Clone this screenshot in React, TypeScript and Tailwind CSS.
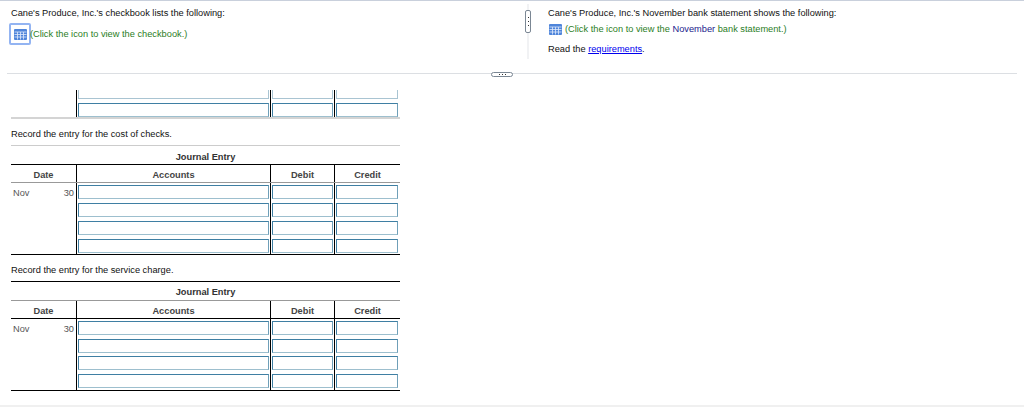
function TableIcon() {
  return (
    <svg width="13" height="11" viewBox="0 0 13 11" className="block shrink-0">
      <rect width="13" height="11" rx="1" fill="#4f85da" />
      <path
        d="M0.5 3h12M0.5 5.5h12M0.5 8h12M3.5 3v7.5M6.5 3v7.5M9.5 3v7.5"
        stroke="#dfeafb"
        strokeWidth="0.8"
        fill="none"
      />
    </svg>
  );
}

function Field() {
  return (
    <div className="h-[14px] border border-[#3f7fa3] border-b-[#9dbfce] border-r-[#6f9fb8] bg-white" />
  );
}

const cols = "grid grid-cols-[65px_194px_64px_66px]";

function EntryRow({ date, day, tall }: { date?: string; day?: string; tall: boolean }) {
  return (
    <div className={`${cols} ${tall ? "h-[18px]" : "h-[17.67px]"}`}>
      <div className="flex justify-between pt-[4.5px] pl-[2px] pr-[2px] text-[#555]">
        <span>{date}</span>
        <span>{day}</span>
      </div>
      <div className="border-l border-black pt-[2px] pl-px pr-px">
        <Field />
      </div>
      <div className="border-l border-black pt-[2px] pl-px pr-px">
        <Field />
      </div>
      <div className="border-l border-black pt-[2px] pl-px pr-[2px]">
        <Field />
      </div>
    </div>
  );
}

function Journal({ second = false }: { second?: boolean }) {
  return (
    <div className="w-[389px]">
      <div
        className={`flex h-[19px] items-center justify-center font-bold text-[#333] border-t ${
          second ? "border-black pt-[3px]" : "border-[#ccc] pt-[4px]"
        }`}
      >
        Journal Entry
      </div>
      <div
        className={`${cols} h-[19px] border-t border-b font-bold text-[#444] ${
          second ? "border-t-[#999] border-b-black" : "border-t-black border-b-[#999]"
        }`}
      >
        <div className="flex items-center justify-center pt-[3px]">Date</div>
        <div className="flex items-center justify-center border-l border-black pt-[3px]">Accounts</div>
        <div className="flex items-center justify-center border-l border-black pt-[3px]">Debit</div>
        <div className="flex items-center justify-center border-l border-black pt-[3px]">Credit</div>
      </div>
      <EntryRow date="Nov" day="30" tall={!second} />
      <EntryRow tall={!second} />
      <EntryRow tall={!second} />
      <EntryRow tall={!second} />
      <div className={`h-px bg-black ${second ? "" : "-mt-px"}`} />
    </div>
  );
}

export default function App() {
  return (
    <main
      className="relative h-[407px] w-[1024px] overflow-hidden bg-white text-[9.25px] leading-[11px] text-[#111]"
      style={{ fontFamily: '"Liberation Sans", Arial, sans-serif' }}
    >
      <div className="h-px bg-[#c9d0dc]" />

      <div className="mx-[7px] flex h-[73px] border-b border-[#dcdfe3]">
        <div className="w-[520px] pl-1 pt-[7px]">
          <p>Cane's Produce, Inc.'s checkbook lists the following:</p>
          <div className="mt-[4px] flex items-center">
            <div className="-ml-[2px] -mr-px flex h-[22px] w-[22px] items-center justify-center rounded-[2px] border-2 border-[#93b4f2]">
              <TableIcon />
            </div>
            <span className="text-[#2a7d1e]">(Click the icon to view the checkbook.)</span>
          </div>
        </div>

        <div className="relative mb-[14px] mt-[3px] w-[2px] bg-[#f1f2f4]">
          <div className="absolute -left-[2px] top-[6px] flex h-[23px] w-[6px] flex-col items-center justify-center gap-[3px] rounded-[2px] border border-[#7b8794] bg-white">
            <span className="h-px w-px bg-[#333]" />
            <span className="h-px w-px bg-[#333]" />
            <span className="h-px w-px bg-[#333]" />
          </div>
        </div>

        <div className="pl-[19px] pt-[7px]">
          <p>Cane's Produce, Inc.'s November bank statement shows the following:</p>
          <div className="mt-[5px] flex items-center gap-[3px] pl-px">
            <TableIcon />
            <span className="text-[#2a7d1e]">
              (Click the icon to view the <span className="text-[#1a1a8c]">November</span> bank statement.)
            </span>
          </div>
          <p className="mt-[9px]">
            Read the <a className="text-[#0000ee] underline">requirements</a>.
          </p>
        </div>
      </div>

      <div className="absolute left-[491px] top-[72px] flex h-[5px] w-[22px] items-center justify-center gap-[2px] rounded-[3px] border border-[#7b8794] bg-white">
        <span className="h-px w-px bg-[#333]" />
        <span className="h-px w-px bg-[#333]" />
        <span className="h-px w-px bg-[#333]" />
      </div>

      <div className="pl-[11px] pt-[16px]">
        <div className={`${cols} h-[29px] w-[389px] border-b-2 border-[#d4d4d4]`}>
          <div />
          <div className="border-l border-black px-px">
            <div className="h-[9px] border-x border-b border-[#a9c4d2]" />
            <div className="mt-[4px]">
              <Field />
            </div>
          </div>
          <div className="border-l border-black px-px">
            <div className="h-[9px] border-x border-b border-[#a9c4d2]" />
            <div className="mt-[4px]">
              <Field />
            </div>
          </div>
          <div className="border-l border-black pl-px pr-[2px]">
            <div className="h-[9px] border-x border-b border-[#a9c4d2]" />
            <div className="mt-[4px]">
              <Field />
            </div>
          </div>
        </div>

        <p className="mt-[10px] mb-[5px]">Record the entry for the cost of checks.</p>
        <Journal />

        <p className="mt-[10px] mb-[5px]">Record the entry for the service charge.</p>
        <Journal second />
      </div>

      <div className="absolute bottom-0 left-0 h-[2px] w-full bg-[#f0f0f0]" />
    </main>
  );
}
